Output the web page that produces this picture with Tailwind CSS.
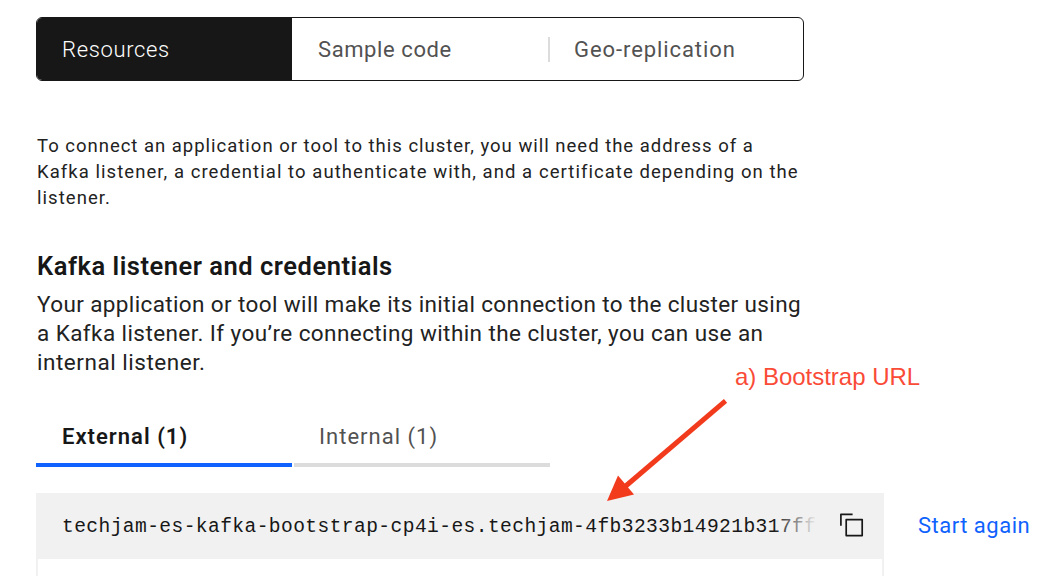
<!DOCTYPE html>
<html lang="en">
<head>
<meta charset="utf-8">
<title>Cluster connection</title>
<script src="https://cdn.jsdelivr.net/npm/@tailwindcss/browser@4"></script>
</head>
<body class="relative h-[576px] w-[1048px] overflow-hidden bg-white pl-9 pt-[17px] font-['Roboto',sans-serif] text-[#171717]">
  <nav class="flex h-16 w-[768px] overflow-hidden rounded-md border border-[#171717] text-[22px] whitespace-nowrap text-[#525252]">
    <div class="flex w-[255px] items-center bg-[#171717] pl-[25px] font-light tracking-[0.65px] text-white">Resources</div>
    <div class="flex w-64 items-center pl-[26px] tracking-[0.6px]">Sample code</div>
    <div class="flex grow items-center"><span class="h-[25px] w-0.5 bg-[#dcdcdc]"></span><span class="pl-6 tracking-[0.92px]">Geo-replication</span></div>
  </nav>

  <p class="mt-[52px] pl-px text-[18.5px] leading-[26px] whitespace-nowrap text-[#222]">
    <span class="block tracking-[0.99px]">To connect an application or tool to this cluster, you will need the address of a</span>
    <span class="block tracking-[1.06px]">Kafka listener, a credential to authenticate with, and a certificate depending on the</span>
    <span class="block tracking-[1.05px]">listener.</span>
  </p>

  <h2 class="mt-[39px] pl-px text-[25.5px] leading-8 font-semibold tracking-[0.52px] whitespace-nowrap">Kafka listener and credentials</h2>
  <p class="mt-[8px] pl-px text-[22.5px] leading-[29px] whitespace-nowrap text-[#222]">
    <span class="block tracking-[0.38px]">Your application or tool will make its initial connection to the cluster using</span>
    <span class="block tracking-[0.42px]">a Kafka listener. If you’re connecting within the cluster, you can use an</span>
    <span class="block tracking-[0.53px]">internal listener.</span>
  </p>

  <div class="mt-[29px] flex gap-0.5 text-[22px] whitespace-nowrap">
    <div class="flex h-[61px] w-64 items-center border-b-4 border-[#0f62fe] pt-1 pl-[26px] font-semibold tracking-[1.02px]">External (1)</div>
    <div class="flex h-[61px] w-64 items-center border-b-4 border-[#dcdcdc] pt-1 pl-[25px] tracking-[1.02px] text-[#525252]">Internal (1)</div>
  </div>

  <div class="mt-[26px] flex">
    <div class="w-[848px] shrink-0">
      <div class="flex h-[66px] items-center bg-[#f1f1f1] pl-[26px]">
        <div class="relative w-[755px] pt-px font-['Liberation_Mono',monospace] text-[19.6px] leading-[30px] tracking-[0.41px] whitespace-nowrap">techjam-es-kafka-bootstrap-cp4i-es.techjam-4fb3233b14921b317ff
          <span class="absolute top-0 right-0 h-full w-11 bg-linear-to-r from-[#f1f1f1]/0 to-[#f1f1f1]"></span>
        </div>
        <svg class="mb-0.5 ml-[21px]" width="26" height="26" viewBox="0 0 26 26" fill="none" stroke="#171717" stroke-width="1.7" stroke-linejoin="round"><path d="M2.9 13.7V2.3H14.6M8.2 7.6H24.2V23.6H8.2Z"/></svg>
      </div>
      <div class="h-[17px] border-x-2 border-[#f1f1f1]"></div>
    </div>
    <a class="ml-[34px] flex h-16 items-center text-[22px] tracking-[0.5px] whitespace-nowrap text-[#0f62fe]">Start again</a>
  </div>

  <span class="absolute top-[362px] left-[735px] font-['Liberation_Sans',sans-serif] text-[24px] leading-[30px] tracking-[-0.02px] whitespace-nowrap text-[#fa4b37]">a) Bootstrap URL</span>
  <svg class="absolute top-[395px] left-[600px]" width="135" height="112" viewBox="600 395 135 112"><path d="M725.5 400.8 624 487.5" stroke="#f23a1d" stroke-width="5" fill="none"/><path d="M607 501 618 475.5 634 494.5Z" fill="#f23a1d"/></svg>
</body>
</html>
